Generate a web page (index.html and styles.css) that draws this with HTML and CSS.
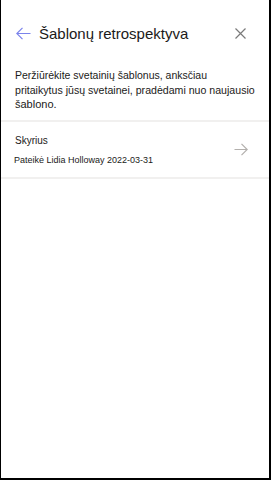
FILE: index.html
```html
<!DOCTYPE html>
<html lang="lt">
<head>
<meta charset="utf-8">
<link rel="stylesheet" href="styles.css">
</head>
<body>
<div class="panel">
  <div class="header">
    <svg class="back" width="15" height="13" viewBox="0 0 15 13"><path d="M6.5 0.8 L0.8 6.5 L6.5 12.2 M0.8 6.5 H14.5" fill="none" stroke="#7b83eb" stroke-width="1.2"/></svg>
    <div class="title">Šablonų retrospektyva</div>
    <svg class="close" width="11" height="11" viewBox="0 0 11 11"><path d="M0.5 0.5 L10.5 10.5 M10.5 0.5 L0.5 10.5" fill="none" stroke="#7a7a7a" stroke-width="1.2"/></svg>
  </div>
  <div class="desc">
    <span class="l1">Peržiūrėkite svetainių šablonus, anksčiau</span>
    <span class="l2">pritaikytus jūsų svetainei, pradėdami nuo naujausio</span>
    <span class="l3">šablono.</span>
  </div>
  <div class="item">
    <div class="item-text">
      <div class="item-title">Skyrius</div>
      <div class="item-meta">Pateikė Lidia Holloway 2022-03-31</div>
    </div>
    <svg class="go" width="14" height="13" viewBox="0 0 14 13"><path d="M7.5 0.8 L13.2 6.5 L7.5 12.2 M13.2 6.5 H0.5" fill="none" stroke="#b3b0ad" stroke-width="1.2"/></svg>
  </div>
</div>
</body>
</html>
```
FILE: styles.css
```css
html, body { margin: 0; padding: 0; background: #fff; }
body { font-family: "Liberation Sans", Arial, sans-serif; color: #1b1a19; }
.panel {
  width: 271px;
  height: 480px;
  box-sizing: border-box;
  border-left: 1px solid #000;
  border-right: 2px solid #000;
  border-bottom: 2px solid #000;
  display: flex;
  flex-direction: column;
}
.header {
  display: flex;
  align-items: center;
  height: 22px;
  margin-top: 22px;
  padding-left: 15px;
  padding-right: 23px;
}
.back { flex: none; }
.title {
  font-size: 15px;
  margin-left: 8px;
  flex: 1;
}
.close { flex: none; }
.desc {
  padding: 24px 14px 0 14px;
  display: flex;
  flex-direction: column;
}
.l1 { font-size: 10.5px; line-height: 15px; }
.l2 { font-size: 10.6px; line-height: 14px; }
.l3 { font-size: 11px; line-height: 14px; }
.item {
  margin-top: 9px;
  border-top: 2px solid #f1f0ef;
  border-bottom: 2px solid #f1f0ef;
  height: 55px;
  display: flex;
  align-items: center;
  padding: 0 21px 0 13px;
}
.item-text { flex: 1; display: flex; flex-direction: column; gap: 9px; }
.item-title { font-size: 10px; padding-left: 1px; }
.item-meta { font-size: 9px; }
.go { flex: none; }
```
